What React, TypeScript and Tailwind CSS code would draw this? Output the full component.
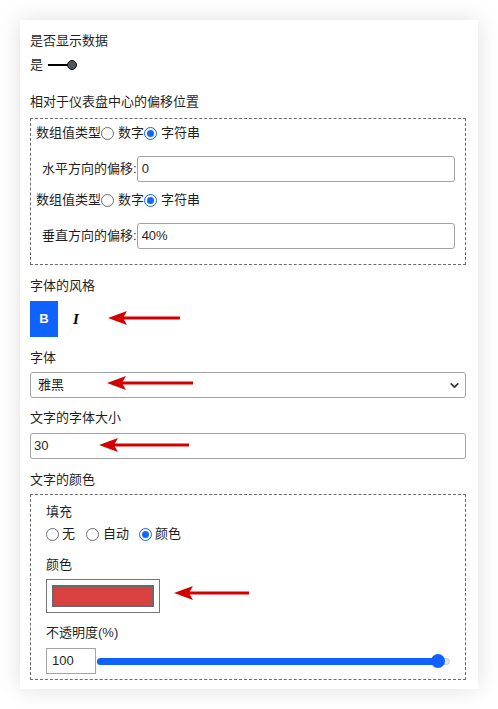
import { ChevronDown } from "lucide-react";

const font = "font-['Liberation_Sans','Noto_Sans_CJK_SC',sans-serif]";

type ArrowProps = { left: number; width: number; cy: number };

// red annotation arrows laid over the form
const Arrow = ({ left, width, cy }: ArrowProps) => (
  <svg
    className="absolute pointer-events-none"
    style={{ left, top: cy - 8, width, height: 16 }}
    viewBox={`0 0 ${width} 16`}
  >
    <rect x={14} y={6.5} width={width - 14} height={3} fill="#d40000" />
    <polygon points="0,8 19,1 15,8 19,15" fill="#d40000" />
  </svg>
);

const Radio = ({ checked, className = "" }: { checked?: boolean; className?: string }) =>
  checked ? (
    <span className={`w-[13px] h-[13px] rounded-full border-[1.5px] border-[#1467f5] flex items-center justify-center shrink-0 ${className}`}>
      <span className="w-[7px] h-[7px] rounded-full bg-[#1467f5]" />
    </span>
  ) : (
    <span className={`block w-[13px] h-[13px] rounded-full border border-[#6b6b6b] bg-white shrink-0 ${className}`} />
  );

const TypeRow = () => (
  <div className="flex items-center h-[20px]">
    <span>数组值类型</span>
    <Radio />
    <span className="ml-[4px]">数字</span>
    <Radio checked />
    <span className="ml-[4px]">字符串</span>
  </div>
);

const OffsetRow = ({ label, value }: { label: string; value: string }) => (
  <div className="flex items-center mt-[13px] ml-[6px]">
    <span>{label}</span>
    <div className="flex-1 h-[26px] border border-[#a3a3a3] rounded-[3px] pl-[4px] flex items-center">{value}</div>
  </div>
);

export default function App() {
  return (
    <div className={`w-[498px] h-[709px] bg-white pt-[20px] pl-[20px] ${font}`}>
      <div className="relative w-[458px] h-[669px] bg-white shadow-[0_0_22px_rgba(0,0,0,0.13)] pl-[10px] pr-[12px] pt-[11px] text-[13px] leading-[20px] text-[#1f1f1f]">
        <div className="h-[20px]">是否显示数据</div>
        <div className="flex items-center h-[20px] mt-[4px]">
          <span>是</span>
          <span className="ml-[5px] w-[20px] h-[2px] bg-black" />
          <span className="-ml-[1px] w-[10px] h-[10px] rounded-full bg-[#4f565b] border border-black" />
        </div>

        <div className="h-[20px] mt-[17px]">相对于仪表盘中心的偏移位置</div>
        <div className="mt-[6px] border border-dashed border-[#6b6b6b] pl-[5px] pr-[10px] pt-[4px] pb-[15px]">
          <TypeRow />
          <OffsetRow label="水平方向的偏移:" value="0" />
          <div className="mt-[8px]">
            <TypeRow />
          </div>
          <OffsetRow label="垂直方向的偏移:" value="40%" />
        </div>

        <div className="h-[20px] mt-[11px]">字体的风格</div>
        <div className="flex items-center mt-[5px] h-[36px]">
          <div className="w-[28px] h-[36px] bg-[#0f62fe] text-white font-bold text-[13px] flex items-center justify-center">B</div>
          <span className="ml-[15px] font-['Liberation_Serif',serif] italic font-bold text-[15px] text-black">I</span>
        </div>

        <div className="h-[20px] mt-[11px]">字体</div>
        <div className="mt-[4px] h-[26px] border border-[#a3a3a3] rounded-[3px] pl-[7px] pr-[4px] flex items-center justify-between">
          <span>雅黑</span>
          <ChevronDown size={13} strokeWidth={3.2} className="text-[#333]" />
        </div>

        <div className="h-[20px] mt-[10px]">文字的字体大小</div>
        <div className="mt-[5px] h-[26px] border border-[#a3a3a3] rounded-[3px] pl-[3px] flex items-center">30</div>

        <div className="h-[20px] mt-[11px]">文字的颜色</div>
        <div className="mt-[4px] border border-dashed border-[#6b6b6b] pl-[15px] pr-[15px] pt-[7px] pb-[5px]">
          <div className="h-[20px]">填充</div>
          <div className="flex items-center h-[20px] mt-[2px]">
            <Radio />
            <span className="ml-[3px]">无</span>
            <Radio className="ml-[11px]" />
            <span className="ml-[4px]">自动</span>
            <Radio checked className="ml-[10px]" />
            <span className="ml-[3px]">颜色</span>
          </div>
          <div className="h-[20px] mt-[11px]">颜色</div>
          <div className="mt-[4px] w-[114px] h-[34px] border border-[#777] p-[5px]">
            <div className="w-full h-full bg-[#d94040] border-2 border-[#6a6a6a]" />
          </div>
          <div className="h-[20px] mt-[10px]">不透明度(%)</div>
          <div className="flex items-center mt-[5px]">
            <div className="w-[50px] h-[26px] border border-[#a3a3a3] pl-[5px] flex items-center">100</div>
            <div className="relative flex-1 h-[26px] ml-[1px] flex items-center">
              <div className="w-full h-[7px] rounded-full bg-[#e4e4e4] border border-[#c8c8c8]" />
              <div className="absolute left-0 right-[10px] h-[7px] rounded-full bg-[#0f62fe]" />
              <div className="absolute right-[5px] w-[14px] h-[14px] rounded-full bg-[#0f62fe]" />
            </div>
          </div>
        </div>

        <Arrow left={88} width={72} cy={298} />
        <Arrow left={87} width={86} cy={363} />
        <Arrow left={79} width={90} cy={425} />
        <Arrow left={154} width={75} cy={573} />
      </div>
    </div>
  );
}
